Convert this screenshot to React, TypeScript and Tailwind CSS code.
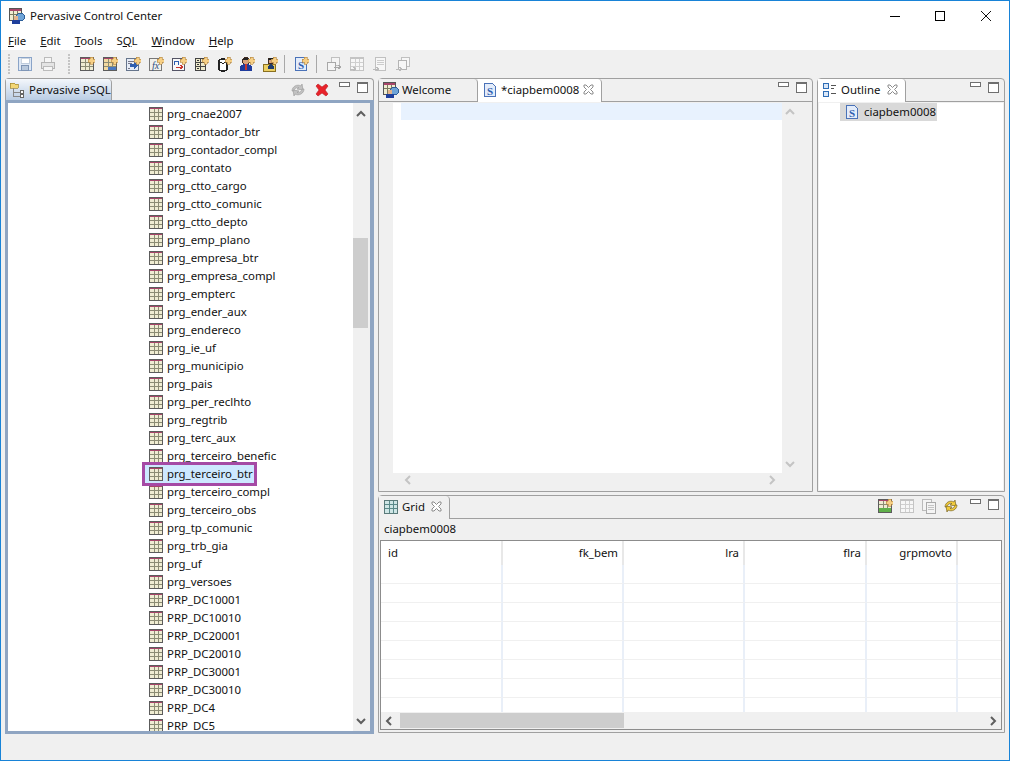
const tables = [
  "prg_cnae2007", "prg_contador_btr", "prg_contador_compl", "prg_contato", "prg_ctto_cargo",
  "prg_ctto_comunic", "prg_ctto_depto", "prg_emp_plano", "prg_empresa_btr", "prg_empresa_compl",
  "prg_empterc", "prg_ender_aux", "prg_endereco", "prg_ie_uf", "prg_municipio", "prg_pais",
  "prg_per_reclhto", "prg_regtrib", "prg_terc_aux", "prg_terceiro_benefic", "prg_terceiro_btr",
  "prg_terceiro_compl", "prg_terceiro_obs", "prg_tp_comunic", "prg_trb_gia", "prg_uf", "prg_versoes",
  "PRP_DC10001", "PRP_DC10010", "PRP_DC20001", "PRP_DC20010", "PRP_DC30001", "PRP_DC30010",
  "PRP_DC4", "PRP_DC5",
];

const Svg = ({ children, size = 16 }: { children: React.ReactNode; size?: number }) => (
  <svg width={size} height={size} viewBox="0 0 16 16" className="shrink-0" shapeRendering="crispEdges">
    {children}
  </svg>
);

const Plus = () => (
  <path d="M11 1h3v2h2v3h-2v2h-3V6H9V3h2z" fill="#f6cf85" stroke="#b08440" strokeWidth="0.6" />
);

const Grid = ({ fill = "#efecd2", line = "#8c8c74", stroke = "#5c5c5c" }) => (
  <>
    <rect x="1.5" y="1.5" width="13" height="13" fill={fill} stroke={stroke} />
    <path d="M2 2h12v1H2z" fill="#a8456a" />
    <path d="M2 6.5h12M2 10.5h12M6 3v11M10 3v11" stroke={line} strokeWidth="1" fill="none" />
  </>
);

const TableIcon = () => (
  <Svg>
    <Grid />
  </Svg>
);

const SFile = ({ plus }: { plus?: boolean }) => (
  <Svg>
    <path d="M2.5 1.5h8l3 3v10h-11z" fill="#e3ecfa" stroke="#4a72b8" />
    <text x="8" y="12.5" textAnchor="middle" fontSize="11" fontWeight="700" fontFamily="Liberation Serif, serif" fill="#2f5fb0">
      S
    </text>
    {plus && <Plus />}
  </Svg>
);

const AppIcon = () => (
  <Svg>
    <rect x="0.5" y="0.5" width="12" height="12" fill="#efecd2" stroke="#555" />
    <path d="M1 1h11v2H1z" fill="#a8456a" />
    <path d="M4.500 3v9M8.500 3v9M1 6.500h11" stroke="#7a7a60" />
    <ellipse cx="11.500" cy="9" rx="4" ry="3.500" fill="#6fa4d8" stroke="#2d5f9a" />
    <circle cx="7" cy="10" r="2.300" fill="#e4b48c" />
    <rect x="3" y="12" width="8" height="4" fill="#1f3f9c" />
  </Svg>
);

const Grip = () => (
  <svg width="4" height="22" viewBox="0 0 4 22" className="shrink-0">
    {[1, 4, 7, 10, 13, 16, 19].map((y) => (
      <rect key={y} x="1" y={y} width="2" height="2" fill="#c4c4c4" />
    ))}
  </svg>
);

const ToolIcons: React.ReactNode[] = [
  <Svg key="a"><Grid /><Plus /></Svg>,
  <Svg key="b"><Grid fill="#f3d9a0" /><path d="M6 11h8v3H6z" fill="#4a78c0" /><Plus /></Svg>,
  <Svg key="c">
    <rect x="1.5" y="2.5" width="12" height="12" fill="#e6ecf6" stroke="#66758c" />
    <path d="M3 5h6M3 7h4M3 12h2" stroke="#778" />
    <path d="M5 8h4V6l4 3.5-4 3.5v-2H5z" fill="#2f5fb0" />
    <Plus />
  </Svg>,
  <Svg key="d">
    <rect x="1.5" y="2.5" width="12" height="12" fill="#f1f1ec" stroke="#777" />
    <text x="7.5" y="13" textAnchor="middle" fontSize="10" fontStyle="italic" fontFamily="Liberation Serif, serif" fill="#2f4f80">fx</text>
    <Plus />
  </Svg>,
  <Svg key="e">
    <rect x="1.5" y="2.5" width="12" height="12" fill="#f8f8f8" stroke="#556" />
    <path d="M3 9V5h4v4" stroke="#2f5fb0" fill="none" />
    <path d="M5 11h6M9 9l3 2-3 2" stroke="#c8362e" fill="none" />
    <Plus />
  </Svg>,
  <Svg key="f">
    <rect x="2.5" y="2.5" width="10" height="12" fill="#eeeacb" stroke="#444" />
    <path d="M3 6.5h9M3 10.5h9M7 3v11" stroke="#444" />
    <path d="M4 4h2v1H4zM4 8h2v1H4zM4 12h2v1H4z" fill="#333" />
    <Plus />
  </Svg>,
  <Svg key="g">
    <path d="M3 4.5c0-2 8-2 8 0v9c0 2-8 2-8 0z" fill="#fff" stroke="#222" strokeWidth="1.4" />
    <path d="M3 6c1.5 1.5 6.5 1.5 8 0" stroke="#222" fill="none" />
    <Plus />
  </Svg>,
  <Svg key="h">
    <circle cx="7" cy="5" r="3.4" fill="#d9a27b" stroke="#402a20" />
    <path d="M3.5 4c1-3.5 6-3.5 7 0z" fill="#222" />
    <path d="M1 15v-3c0-3 2-4 6-4s6 1 6 4v3z" fill="#1f3b9c" />
    <path d="M6 8h2v6H6z" fill="#c8362e" />
    <Plus />
  </Svg>,
  <Svg key="i">
    <rect x="1" y="8" width="12" height="7" fill="#eccf62" stroke="#8a7020" />
    <circle cx="9" cy="5" r="3" fill="#d9a27b" stroke="#402a20" />
    <path d="M6 4c1-3 5-3 6 0z" fill="#222" />
    <path d="M6 13v-2c0-2 2-3 3-3s3 1 3 3v2z" fill="#1f3b6c" />
    <Plus />
  </Svg>,
];

const DisabledIcons: React.ReactNode[] = [
  <Svg key="a">
    <rect x="5.5" y="1.5" width="8" height="8" fill="#f5f5f5" stroke="#c0c0c0" />
    <rect x="1.5" y="6.5" width="8" height="8" fill="#f5f5f5" stroke="#a8a8a8" />
    <path d="M8 11h5M12 9l3 2-3 2" stroke="#a8a8a8" fill="none" />
  </Svg>,
  <Svg key="b">
    <Grid fill="#f7f7f7" line="#cfcfcf" stroke="#c4c4c4" />
    <path d="M2 2h12v1H2z" fill="#c4c4c4" />
    <path d="M1 13h5M4 11l3 2-3 2" stroke="#bbb" fill="#f5f5f5" />
  </Svg>,
  <Svg key="c">
    <rect x="3.5" y="1.5" width="10" height="13" fill="#f7f7f7" stroke="#c0c0c0" />
    <path d="M5 4h7M5 6h7M5 8h7" stroke="#ccc" />
    <path d="M1 13h5M4 11l3 2-3 2" stroke="#bbb" fill="#f5f5f5" />
  </Svg>,
  <Svg key="d">
    <rect x="6.5" y="1.5" width="8" height="9" fill="#f7f7f7" stroke="#c0c0c0" />
    <rect x="3.5" y="4.5" width="8" height="9" fill="#f7f7f7" stroke="#b4b4b4" />
    <path d="M1 13h5M4 11l3 2-3 2" stroke="#bbb" fill="#f5f5f5" />
  </Svg>,
];

const Close = () => (
  <svg width="11" height="11" viewBox="0 0 11 11" className="shrink-0">
    <path d="M1 1l2 0 2.500 2.500L8 1l2 0 0 2-2.500 2.500L10 8l0 2-2 0-2.500-2.500L3 10l-2 0 0-2 2.500-2.500L1 3z" fill="#fff" stroke="#8b8b8b" />
  </svg>
);

const MinMax = () => (
  <div className="flex items-start gap-[7px] ml-[7px] mb-[5px]">
    <div className="w-[11px] h-[5px] border border-[#6f6f6f] bg-white" />
    <div className="w-[11px] h-[11px] border border-[#6f6f6f] border-t-2 bg-white" />
  </div>
);

const Chev = ({ dir, dim }: { dir: "u" | "d" | "l" | "r"; dim?: boolean }) => {
  const d = {
    u: "M1 7l4-4 4 4",
    d: "M1 3l4 4 4-4",
    l: "M7 1L3 5l4 4",
    r: "M3 1l4 4-4 4",
  }[dir];
  return (
    <svg width="10" height="10" viewBox="0 0 10 10" className="shrink-0">
      <path d={d} fill="none" stroke={dim ? "#c4c4c4" : "#5f5f5f"} strokeWidth="2" />
    </svg>
  );
};

const SyncIcon = ({ color = "#c2c2c2", line = "#9f9f9f" }) => (
  <svg width="16" height="16" viewBox="0 0 16 16" className="shrink-0">
    <path d="M2 9a6 6 0 0 1 9-5l1-2 1 6-6-1 2-1.500A4 4 0 0 0 4 9z" fill={color} stroke={line} strokeWidth="0.7" />
    <path d="M14 7a6 6 0 0 1-9 5l-1 2-1-6 6 1-2 1.500A4 4 0 0 0 12 7z" fill={color} stroke={line} strokeWidth="0.7" />
  </svg>
);

function Panel({
  tabs,
  tools,
  children,
  className,
}: {
  tabs: React.ReactNode;
  tools?: React.ReactNode;
  children: React.ReactNode;
  className: string;
}) {
  return (
    <section className={`flex flex-col border border-[#a0a0a0] rounded-t-[4px] bg-[#f0f0f0] ${className}`}>
      <div className="h-[23px] flex shrink-0 border-b border-[#a0a0a0]">
        {tabs}
        <div className="ml-auto flex items-center pr-[5px]">
          {tools}
          <MinMax />
        </div>
      </div>
      <div className="flex-1 min-h-0 flex flex-col relative">{children}</div>
    </section>
  );
}

const Tab = ({
  icon,
  label,
  width,
  fill = "bg-[#f0f0f0]",
  raised = true,
  close = true,
}: {
  icon: React.ReactNode;
  label: string;
  width: string;
  fill?: string;
  raised?: boolean;
  close?: boolean;
}) => (
  <div
    className={`${width} ${fill} ${raised ? "h-[23px] pb-[2px]" : "h-[22px]"} shrink-0 flex items-center gap-[3px] pl-[4px] pr-[7px] border-r border-[#a0a0a0] rounded-tr-[4px]`}
  >
    {icon}
    <span className="flex-1 whitespace-nowrap">{label}</span>
    {close && <Close />}
  </div>
);

function TreePanel() {
  return (
    <section className="w-[369px] flex flex-col">
      <div className="h-[22px] flex shrink-0 border-t border-l border-r border-[#a0a0a0] rounded-t-[4px] bg-[#f0f0f0]">
        <div className="w-[106px] h-[22px] flex items-center gap-[4px] pl-[3px] bg-gradient-to-b from-[#f4f7fb] to-[#b7cbe3] border-r border-[#a0a0a0] rounded-tr-[4px]">
          <Svg>
            <path d="M1 1h4l1 1h3v4H1z" fill="#f2d675" stroke="#a08830" strokeWidth="0.7" />
            <path d="M4 6v8h7M4 10h7" stroke="#888" fill="none" />
            <rect x="11" y="8.500" width="3" height="3" fill="#fff" stroke="#666" />
            <rect x="11" y="12.500" width="3" height="3" fill="#fff" stroke="#666" />
          </Svg>
          <span className="whitespace-nowrap">Pervasive PSQL</span>
        </div>
        <div className="ml-auto flex items-center pr-[5px]">
          <SyncIcon />
          <svg width="14" height="14" viewBox="0 0 14 14" className="ml-[9px] mr-[3px] shrink-0">
            <path d="M1 3l2-2 4 3 4-3 2 2-3 4 3 4-2 2-4-3-4 3-2-2 3-4z" fill="#e8222a" stroke="#b81a20" strokeWidth="0.6" />
          </svg>
          <MinMax />
        </div>
      </div>
      <div className="flex-1 min-h-0 border-[3px] border-r-4 border-[#8fa5c2] bg-white flex overflow-hidden">
        <div className="flex-1 min-w-0 pl-[140px] pt-[2px] overflow-hidden">
          {tables.map((t) => (
            <div
              key={t}
              className={`h-[18px] flex items-center gap-[3px] whitespace-nowrap ${
                t === "prg_terceiro_btr" ? "w-[109px] -ml-[3px] pl-[3px] outline-[3px] outline-[#a54aa5] bg-[#cde8ff]" : ""
              }`}
            >
              <TableIcon />
              <span>{t}</span>
            </div>
          ))}
        </div>
        <div className="w-[17px] shrink-0 bg-[#f0f0f0] flex flex-col items-center pt-[6px] pb-[5px] pr-[2px]">
          <Chev dir="u" />
          <div className="w-[15px] h-[90px] bg-[#cdcdcd] mt-[119px]" />
          <div className="mt-auto">
            <Chev dir="d" />
          </div>
        </div>
      </div>
    </section>
  );
}

const columns = [
  { name: "id", width: "w-[122px]", right: false },
  { name: "fk_bem", width: "w-[121px]", right: true },
  { name: "lra", width: "w-[121px]", right: true },
  { name: "flra", width: "w-[122px]", right: true },
  { name: "grpmovto", width: "w-[91px]", right: true },
];

const blankRows = [0, 1, 2, 3, 4, 5, 6, 7];

export default function App() {
  return (
    <div className="w-[1010px] h-[761px] border border-[#1883d7] bg-[#f0f0f0] flex flex-col overflow-hidden text-[11.4px] leading-[16px] text-[#111] font-['Noto_Sans','Open_Sans',sans-serif]">
      {/* Title bar */}
      <header className="h-[30px] shrink-0 bg-white flex items-center pl-[8px]">
        <AppIcon />
        <span className="ml-[5px]">Pervasive Control Center</span>
        <div className="ml-auto flex items-center pr-[18px]">
          <div className="w-[10px] h-px bg-black" />
          <div className="w-[10px] h-[10px] border border-black ml-[35px]" />
          <svg width="10" height="10" viewBox="0 0 10 10" className="ml-[36px]">
            <path d="M0 0l10 10M10 0L0 10" stroke="#111" />
          </svg>
        </div>
      </header>

      {/* Menu */}
      <nav className="h-[19px] shrink-0 bg-white flex items-center pl-[7px] gap-[14px]">
        <span><u>F</u>ile</span>
        <span><u>E</u>dit</span>
        <span><u>T</u>ools</span>
        <span>S<u>Q</u>L</span>
        <span><u>W</u>indow</span>
        <span><u>H</u>elp</span>
      </nav>

      {/* Toolbar */}
      <div className="h-[27px] mb-[1px] shrink-0 flex items-center pl-[6px]">
        <Grip />
        <div className="flex ml-[2px] w-[46px]">
          <div className="w-[23px] flex justify-center">
            <Svg>
              <rect x="1.500" y="1.500" width="13" height="13" rx="1" fill="#dfe8f4" stroke="#8aa4c8" />
              <rect x="4" y="2" width="8" height="5" fill="#fff" stroke="#a8b8cc" strokeWidth="0.6" />
              <rect x="4.500" y="9.500" width="7" height="5" fill="#b8c8dc" stroke="#7f95b5" />
            </Svg>
          </div>
          <div className="w-[23px] flex justify-center">
            <Svg>
              <rect x="4.500" y="1.500" width="7" height="5" fill="#f6f6f6" stroke="#bbb" />
              <rect x="1.500" y="6.500" width="13" height="6" fill="#e4e4e4" stroke="#b4b4b4" />
              <rect x="3.500" y="10.500" width="9" height="4" fill="#f6f6f6" stroke="#bbb" />
            </Svg>
          </div>
        </div>
        <div className="ml-[8px]">
          <Grip />
        </div>
        <div className="flex ml-[5px]">
          {ToolIcons.map((icon, i) => (
            <div key={i} className="w-[22.800px] flex justify-center">
              {icon}
            </div>
          ))}
        </div>
        <div className="w-px h-[18px] bg-[#a8a8a8] ml-[3px]" />
        <div className="w-[31px] flex justify-center">
          <SFile plus />
        </div>
        <div className="w-px h-[18px] bg-[#a8a8a8]" />
        <div className="flex ml-[5px]">
          {DisabledIcons.map((icon, i) => (
            <div key={i} className="w-[23px] flex justify-center">
              {icon}
            </div>
          ))}
        </div>
      </div>

      {/* Workbench */}
      <main className="h-[656px] shrink-0 flex gap-[4px] pl-[4px]">
        <TreePanel />
        <div className="w-[627px] flex flex-col gap-[3px]">
          <div className="h-[414px] shrink-0 flex gap-[4px]">
            <Panel
              className="w-[435px]"
              tabs={
                <>
                  <Tab icon={<AppIcon />} label="Welcome" width="w-[99px]" raised={false} close={false} />
                  <Tab icon={<SFile />} label="*ciapbem0008" width="w-[124px]" fill="bg-white" />
                </>
              }
            >
              <div className="h-[370px] mt-[1px] ml-[2px] mr-[30px] flex bg-white">
                <div className="w-[12px] bg-[#f0f0f0]" />
                <div className="flex-1 pl-[8px]">
                  <div className="h-[17px] bg-[#e8f2fe]" />
                </div>
              </div>
              <div className="absolute right-[17px] top-[5px]">
                <Chev dir="u" dim />
              </div>
              <div className="absolute right-[17px] top-[357px]">
                <Chev dir="d" dim />
              </div>
              <div className="flex justify-between pl-[24px] pr-[35px] pt-[2px]">
                <Chev dir="l" dim />
                <Chev dir="r" dim />
              </div>
            </Panel>
            <Panel
              className="w-[188px]"
              tabs={
                <Tab
                  icon={
                    <Svg>
                      <rect x="1.500" y="1.500" width="5" height="5" fill="#dbe8f8" stroke="#2f6db5" />
                      <rect x="1.500" y="9.500" width="5" height="5" fill="#dbe8f8" stroke="#2f6db5" />
                      <path d="M9 3h5M9 6h3M9 11h5" stroke="#555" />
                    </Svg>
                  }
                  label="Outline"
                  width="w-[88px]"
                  fill="bg-white"
                />
              }
            >
              <div className="flex-1 bg-white mt-[1px] mx-[1px] mb-[1px] pl-[21px]">
                <div className="w-[97px] h-[18px] bg-[#d9d9d9] flex items-center gap-[4px] pl-[4px]">
                  <SFile />
                  <span>ciapbem0008</span>
                </div>
              </div>
            </Panel>
          </div>

          <Panel
            className="h-[238px] shrink-0"
            tabs={
              <Tab
                icon={
                  <Svg>
                    <rect x="1.500" y="1.500" width="13" height="13" fill="#cfe6e6" stroke="#5a7a7a" />
                    <path d="M2 5.500h12M2 9.500h12M6 2v12M10 2v12" stroke="#5a8a8a" />
                  </Svg>
                }
                label="Grid"
                width="w-[71px]"
              />
            }
            tools={
              <div className="flex items-center gap-[6px] mr-[4px] mb-[3px]">
                <Svg>
                  <Grid />
                  <path d="M2 10h12v4H2z" fill="#5fb04a" />
                  <Plus />
                </Svg>
                <Svg>
                  <Grid fill="#f7f7f7" line="#cfcfcf" stroke="#c4c4c4" />
                  <path d="M2 2h12v1H2z" fill="#c4c4c4" />
                </Svg>
                <Svg>
                  <rect x="1.500" y="1.500" width="9" height="11" fill="#f4f4f4" stroke="#bbb" />
                  <rect x="5.500" y="4.500" width="9" height="11" fill="#f4f4f4" stroke="#aaa" />
                  <path d="M7 7h6M7 9h6M7 11h6" stroke="#c4c4c4" />
                </Svg>
                <SyncIcon color="#f2cc3c" line="#7a6420" />
              </div>
            }
          >
            <div className="h-[20px] shrink-0 flex items-center pl-[5px]">ciapbem0008</div>
            <div className="h-[190px] shrink-0 mt-px ml-px w-[622px] border border-[#8c8c8c] bg-white flex flex-col overflow-hidden">
              <div className="flex flex-1 min-h-0 overflow-hidden">
                {columns.map((c) => (
                  <div key={c.name} className={`${c.width} shrink-0`}>
                    <div
                      className={`h-[24px] flex items-center pl-[7px] pr-[4px] border-r-2 border-[#e8e8e8] ${c.right ? "justify-end" : ""}`}
                    >
                      {c.name}
                    </div>
                    {blankRows.map((r) => (
                      <div key={r} className="h-[19px] border-b border-r-2 border-b-[#f0f0f0] border-r-[#e9eff8]" />
                    ))}
                  </div>
                ))}
                <div className="flex-1">
                  <div className="h-[24px]" />
                  {blankRows.map((r) => (
                    <div key={r} className="h-[19px] border-b border-[#f0f0f0]" />
                  ))}
                </div>
              </div>
              <div className="h-[17px] shrink-0 bg-[#f0f0f0] flex items-center pl-[3px] pr-[3px]">
                <Chev dir="l" />
                <div className="w-[224px] h-[15px] bg-[#cdcdcd] ml-[6px]" />
                <div className="ml-auto">
                  <Chev dir="r" />
                </div>
              </div>
            </div>
          </Panel>
        </div>
      </main>
    </div>
  );
}
